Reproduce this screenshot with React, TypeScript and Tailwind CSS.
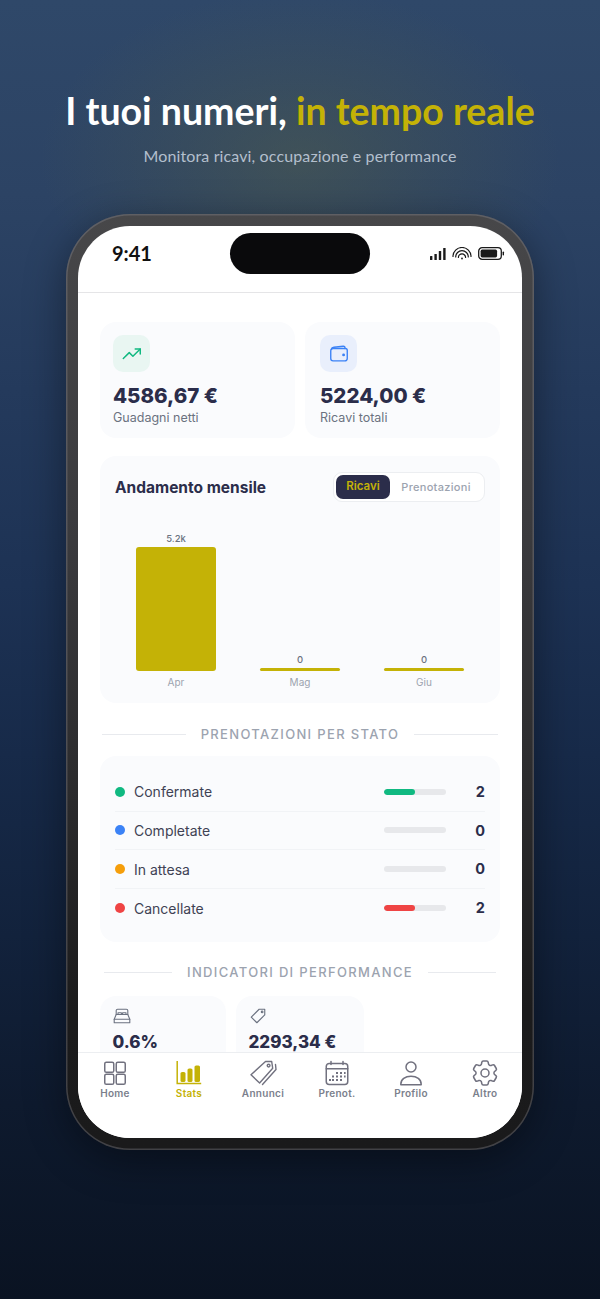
import React from "react";

const inter = "font-['Inter',sans-serif]";

function Trend() {
  return (
    <svg width="22" height="22" viewBox="0 0 24 24" fill="none" stroke="#10b981" strokeWidth="1.6" strokeLinecap="round" strokeLinejoin="round">
      <path d="M2.5 17 9 10.5l4 4L21 6.5" />
      <path d="M15.5 6.5H21V12" />
    </svg>
  );
}
function WalletIcon() {
  return (
    <svg width="22" height="22" viewBox="0 0 24 24" fill="none" stroke="#3b82f6" strokeWidth="1.5" strokeLinecap="round" strokeLinejoin="round">
      <path d="M3 8.5A2.5 2.5 0 0 1 5.5 6H19a2 2 0 0 1 2 2v9a2.5 2.5 0 0 1-2.5 2.5h-13A2.5 2.5 0 0 1 3 17V8.5Z" />
      <path d="M3.5 7c.4-1.5 1.5-2.2 3-2.4l10-1.1c1.3-.1 2 .6 2 2V6" />
      <circle cx="17" cy="13" r="0.8" fill="#3b82f6" />
    </svg>
  );
}
function Bed() {
  return (
    <svg width="18" height="18" viewBox="0 0 18 18" fill="none" stroke="#6b7280" strokeWidth="1.1" strokeLinecap="round" strokeLinejoin="round">
      <path d="M3.2 7.5V3.6a1.4 1.4 0 0 1 1.4-1.4h8.8a1.4 1.4 0 0 1 1.4 1.4v3.9" />
      <path d="M3.2 7.5h11.6l2 4.8H1.2l2-4.8Z" />
      <path d="M1.2 12.3v3.4h15.6v-3.4" />
      <path d="M5 7.5V5.8h3.4v1.7M9.6 7.5V5.8H13v1.7" />
    </svg>
  );
}
function Tag() {
  return (
    <svg width="18" height="18" viewBox="0 0 24 24" fill="none" stroke="#6b7280" strokeWidth="1.5" strokeLinecap="round" strokeLinejoin="round">
      <path d="M13.5 3H21v7.5L10.5 21 3 13.5 13.5 3Z" />
      <circle cx="17.5" cy="6.5" r="1.1" />
    </svg>
  );
}

function NavIcon({ name }: { name: string }) {
  const c = "#71717f";
  if (name === "Home")
    return (
      <svg width="26" height="26" viewBox="0 0 26 26" fill="none" stroke={c} strokeWidth="1.5">
        <rect x="2.75" y="2.25" width="9" height="10" rx="1.6" />
        <rect x="14.25" y="2.25" width="9" height="10" rx="1.6" />
        <rect x="2.75" y="14.25" width="9" height="10" rx="1.6" />
        <rect x="14.25" y="14.25" width="9" height="10" rx="1.6" />
      </svg>
    );
  if (name === "Stats")
    return (
      <svg width="26" height="26" viewBox="0 0 26 26" fill="none">
        <path d="M1.2 1v22.5h24" stroke="#c4b206" strokeWidth="1.5" />
        <rect x="4.5" y="12" width="5" height="10" rx="1.6" fill="#c4b206" />
        <rect x="11.5" y="8.5" width="5" height="13.5" rx="1.6" fill="#c4b206" />
        <rect x="18.5" y="5.5" width="5.5" height="16.5" rx="1.6" fill="#c4b206" />
      </svg>
    );
  if (name === "Annunci")
    return (
      <svg width="28" height="28" viewBox="0 0 28 28" fill="none" stroke={c} strokeWidth="1.4" strokeLinejoin="round" strokeLinecap="round">
        <path d="M16.5 2.5h6.2l1 6.8L10.6 24 2 15.8 16.5 2.5Z" />
        <circle cx="19.6" cy="6.6" r="1.4" />
        <path d="M26.5 5.5l.5 5L13.5 25.5" />
      </svg>
    );
  if (name === "Prenot.")
    return (
      <svg width="26" height="26" viewBox="0 0 26 26" fill="none" stroke={c} strokeWidth="1.5" strokeLinecap="round">
        <rect x="2.25" y="3.5" width="21.5" height="21" rx="3" />
        <path d="M2.25 8.75h21.5" />
        <path d="M7 1.5v3M19 1.5v3" />
        <g stroke="none" fill={c}>
          <rect x="12" y="12" width="2" height="2" />
          <rect x="16" y="12" width="2" height="2" />
          <rect x="20" y="12" width="1.6" height="2" />
          <rect x="8" y="15.5" width="2" height="2" />
          <rect x="12" y="15.5" width="2" height="2" />
          <rect x="16" y="15.5" width="2" height="2" />
          <rect x="20" y="15.5" width="1.6" height="2" />
          <rect x="5" y="19" width="2" height="2" />
          <rect x="8" y="19" width="2" height="2" />
          <rect x="12" y="19" width="2" height="2" />
          <rect x="16" y="19" width="2" height="2" />
        </g>
      </svg>
    );
  if (name === "Profilo")
    return (
      <svg width="26" height="26" viewBox="0 0 26 26" fill="none" stroke={c} strokeWidth="1.5" strokeLinejoin="round">
        <circle cx="13" cy="7" r="5" />
        <path d="M2.8 24.2c0-5 4.4-8 10.2-8s10.2 3 10.2 8v.6H2.8v-.6Z" />
      </svg>
    );
  return (
    <svg width="28" height="28" viewBox="1.5 1.5 21 21" fill="none" stroke={c} strokeWidth="1.15" strokeLinecap="round" strokeLinejoin="round">
      <path d="M9.594 3.94c.09-.542.56-.94 1.11-.94h2.593c.55 0 1.02.398 1.11.94l.213 1.281c.063.374.313.686.645.87.074.04.147.083.22.127.325.196.72.257 1.075.124l1.217-.456a1.125 1.125 0 0 1 1.37.49l1.296 2.247a1.125 1.125 0 0 1-.26 1.431l-1.003.827c-.293.241-.438.613-.43.992a7.723 7.723 0 0 1 0 .255c-.008.378.137.75.43.991l1.004.827c.424.35.534.955.26 1.43l-1.298 2.247a1.125 1.125 0 0 1-1.369.491l-1.217-.456c-.355-.133-.75-.072-1.076.124a6.47 6.47 0 0 1-.22.128c-.331.183-.581.495-.644.869l-.213 1.281c-.09.543-.56.94-1.11.94h-2.594c-.55 0-1.019-.398-1.11-.94l-.213-1.281c-.062-.374-.312-.686-.644-.87a6.52 6.52 0 0 1-.22-.127c-.325-.196-.72-.257-1.076-.124l-1.217.456a1.125 1.125 0 0 1-1.369-.49l-1.297-2.247a1.125 1.125 0 0 1 .26-1.431l1.004-.827c.292-.24.437-.613.43-.991a6.932 6.932 0 0 1 0-.255c.007-.38-.138-.751-.43-.992l-1.004-.827a1.125 1.125 0 0 1-.26-1.43l1.297-2.247a1.125 1.125 0 0 1 1.37-.491l1.216.456c.356.133.751.072 1.076-.124.072-.044.146-.086.22-.128.332-.183.582-.495.644-.869l.214-1.28Z" />
      <path d="M15 12a3 3 0 1 1-6 0 3 3 0 0 1 6 0Z" />
    </svg>
  );
}

function StatusIcons() {
  return (
    <div className="flex items-center gap-[6px]">
      <svg width="16" height="12" viewBox="0 0 16 12" fill="#1a1a1a">
        <rect x="0" y="8" width="2.4" height="4" rx="0.5" />
        <rect x="4.4" y="6" width="2.4" height="6" rx="0.5" />
        <rect x="8.8" y="3" width="2.4" height="9" rx="0.5" />
        <rect x="13.2" y="0" width="2.4" height="12" rx="0.5" />
      </svg>
      <svg width="20" height="13" viewBox="0 0 20 13" fill="none" stroke="#1a1a1a" strokeWidth="1.2" strokeLinecap="round">
        <path d="M1 9.5a9 9 0 0 1 18 0" />
        <path d="M3.7 10a6.3 6.3 0 0 1 12.6 0" />
        <path d="M6.4 10.5a3.6 3.6 0 0 1 7.2 0" />
        <circle cx="10" cy="11.5" r="0.9" fill="#1a1a1a" stroke="none" />
      </svg>
      <svg width="27" height="13" viewBox="0 0 27 13" fill="none">
        <rect x="0.7" y="0.7" width="22.6" height="11.6" rx="3.4" stroke="#1a1a1a" strokeWidth="1.3" />
        <rect x="2.6" y="2.6" width="16.5" height="7.8" rx="1.6" fill="#1a1a1a" />
        <rect x="24.6" y="4.5" width="1.4" height="4" rx="0.7" fill="#1a1a1a" />
      </svg>
    </div>
  );
}

function SectionTitle({ text, lineW }: { text: string; lineW: string }) {
  return (
    <div className="flex items-center justify-between px-[2px]">
      <div className={`h-px bg-[#e8eaee] ${lineW}`} />
      <div className={`${inter} text-[13px] font-medium tracking-[1.34px] text-[#9ca3af] leading-none`}>{text}</div>
      <div className={`h-px bg-[#e8eaee] ${lineW}`} />
    </div>
  );
}

function KpiCard({ icon, iconBg, value, label, pad }: { icon: React.ReactNode; iconBg: string; value: string; label: string; pad: string }) {
  return (
    <div className={`h-[116px] rounded-2xl bg-[#fafbfd] pt-[13px] ${pad}`}>
      <div className={`flex h-[37px] w-[37px] items-center justify-center rounded-[10px] ${iconBg}`}>{icon}</div>
      <div className={`${inter} mt-[11px] text-[20.5px] font-extrabold leading-[25px] text-[#2b2d4a]`}>{value}</div>
      <div className={`${inter} mt-[1px] text-[12.5px] leading-[18px] text-[#6b7280]`}>{label}</div>
    </div>
  );
}

function Bar({ value, label, h }: { value: string; label: string; h: string }) {
  return (
    <div className="flex w-[80px] flex-col items-center justify-end">
      <div className={`${inter} mb-[2px] text-[9.5px] font-medium leading-[12px] text-[#6b7280]`}>{value}</div>
      <div className={`w-full rounded-[3px] bg-[#c4b206] ${h}`} />
      <div className={`${inter} mt-[5px] text-[10px] leading-[12px] text-[#9ca3af]`}>{label}</div>
    </div>
  );
}

function StateRow({ dot, label, fill, value, last }: { dot: string; label: string; fill: string | null; value: string; last?: boolean }) {
  return (
    <div className={`flex h-[38.67px] items-center ${last ? "" : "border-b border-[#f1f3f6]"}`}>
      <div className={`h-[10px] w-[10px] rounded-full ${dot}`} />
      <div className={`${inter} ml-[9px] flex-1 text-[14px] text-[#3f4254]`}>{label}</div>
      <div className="h-[6px] w-[62px] overflow-hidden rounded-full bg-[#e7e8eb]">
        {fill && <div className={`h-full w-1/2 rounded-full ${fill}`} />}
      </div>
      <div className={`${inter} w-[39px] text-right text-[14.5px] font-bold text-[#2b2d4a]`}>{value}</div>
    </div>
  );
}

function PerfCard({ icon, value }: { icon: React.ReactNode; value: string }) {
  return (
    <div className="h-[80px] rounded-2xl bg-[#fafbfd] px-[12.5px] pt-[11px]">
      {icon}
      <div className={`${inter} mt-[6px] text-[17px] font-extrabold leading-[22px] text-[#2b2d4a]`}>{value}</div>
    </div>
  );
}

const navItems = ["Home", "Stats", "Annunci", "Prenot.", "Profilo", "Altro"];

export default function App() {
  return (
    <div className="relative h-[1299px] w-[600px] overflow-hidden bg-[linear-gradient(180deg,#2f4869_0%,#2c4364_15%,#243a5c_30%,#1d3254_45%,#172a49_58%,#12223c_72%,#0e1a2e_85%,#0a1322_100%)]">
      <div className="pointer-events-none absolute left-[40px] top-[-10px] h-[340px] w-[520px] bg-[radial-gradient(ellipse_closest-side,rgba(90,100,70,0.42),rgba(90,100,70,0.2)_50%,rgba(90,100,70,0)_100%)]" />
      <div className="relative flex flex-col items-center pt-[88px]">
        <h1 className="font-['Lato',sans-serif] text-[37.5px] font-bold leading-[46px] text-white">
          I tuoi numeri, <span className="text-[#c4b206]">in tempo reale</span>
        </h1>
        <p className="mt-[11px] font-['Lato',sans-serif] text-[16px] tracking-[0.13px] leading-[22px] text-[#b3bfcd]">Monitora ricavi, occupazione e performance</p>

        <div className="mt-[47px] h-[936px] w-[468px] rounded-[64px] bg-[linear-gradient(180deg,#474749_0%,#3a3a3d_35%,#2c2c2e_60%,#1b1b1c_85%,#1a1a1b_100%)] p-[12px] shadow-[inset_0_0_0_1.5px_rgba(140,140,150,0.35),0_10px_40px_rgba(0,0,0,0.4)]">
          <div className="relative flex h-[912px] flex-col overflow-hidden rounded-[52px] bg-white">
            <div className="flex h-[67px] shrink-0 items-start justify-between border-b border-[#e5e5e7] pl-[34px] pr-[17px] pt-[14px]">
              <span className="font-['Lato',sans-serif] text-[20px] font-bold leading-[26px] text-[#111]">9:41</span>
              <div className="pt-[7px]"><StatusIcons /></div>
            </div>
            <div className="absolute left-[152px] top-[7px] h-[41px] w-[140px] rounded-full bg-[#0a0a0c]" />

            <div className="min-h-0 flex-1 overflow-hidden px-[22px] pt-[29px]">
              <div className="grid grid-cols-[195px_195px] gap-[10px]">
                <KpiCard pad="px-[13px]" icon={<Trend />} iconBg="bg-[#e9f6f2]" value="4586,67 €" label="Guadagni netti" />
                <KpiCard pad="px-[15px]" icon={<WalletIcon />} iconBg="bg-[#e9effc]" value="5224,00 €" label="Ricavi totali" />
              </div>

              <div className="mt-[18px] h-[247px] rounded-2xl bg-[#fafbfd] px-[15px] pt-[16px]">
                <div className="flex items-center justify-between">
                  <span className={`${inter} pt-[2px] text-[15.5px] font-bold text-[#2b2d4a]`}>Andamento mensile</span>
                  <div className="flex h-[30px] w-[152px] items-center rounded-[9px] border border-[#eceef1] bg-white px-[2px]">
                    <div className={`${inter} flex h-[24px] w-[54px] items-center justify-center rounded-[7px] bg-[#2b2d4a] text-[11.5px] font-semibold text-[#c4b206]`}>Ricavi</div>
                    <div className={`${inter} flex-1 text-center text-[11px] font-medium tracking-[0.3px] text-[#9ca3af]`}>Prenotazioni</div>
                  </div>
                </div>
                <div className="mt-[21px] flex h-[165px] items-end justify-between px-[21px]">
                  <Bar value="5.2k" label="Apr" h="h-[124px]" />
                  <Bar value="0" label="Mag" h="h-[3px]" />
                  <Bar value="0" label="Giu" h="h-[3px]" />
                </div>
              </div>

              <div className="mt-[25px]">
                <SectionTitle text="PRENOTAZIONI PER STATO" lineW="w-[84px]" />
              </div>

              <div className="mt-[15px] h-[186px] rounded-2xl bg-[#fafbfd] px-[15px] pt-[17px]">
                <StateRow dot="bg-[#10b981]" label="Confermate" fill="bg-[#10b981]" value="2" />
                <StateRow dot="bg-[#3b82f6]" label="Completate" fill={null} value="0" />
                <StateRow dot="bg-[#f59e0b]" label="In attesa" fill={null} value="0" />
                <StateRow dot="bg-[#ef4444]" label="Cancellate" fill="bg-[#ef4444]" value="2" last />
              </div>

              <div className="mt-[24px] px-[2px]">
                <SectionTitle text="INDICATORI DI PERFORMANCE" lineW="w-[68px]" />
              </div>

              <div className="mt-[17px] grid grid-cols-[126px_128px] gap-[10px]">
                <PerfCard icon={<Bed />} value="0.6%" />
                <PerfCard icon={<Tag />} value="2293,34 €" />
              </div>
            </div>

            <div className="relative flex h-[86px] shrink-0 items-start border-t border-[#eceef1] bg-white pt-[6px]">
              {navItems.map((n) => (
                <div key={n} className="flex w-[74px] flex-col items-center">
                  <div className="flex h-[28px] items-center justify-center"><NavIcon name={n} /></div>
                  <div className={`${inter} text-[10px] font-semibold leading-[12px] tracking-[0.3px] ${n === "Stats" ? "text-[#c4b206]" : "text-[#7b7f8c]"}`}>{n}</div>
                </div>
              ))}
            </div>
          </div>
        </div>
      </div>
    </div>
  );
}
